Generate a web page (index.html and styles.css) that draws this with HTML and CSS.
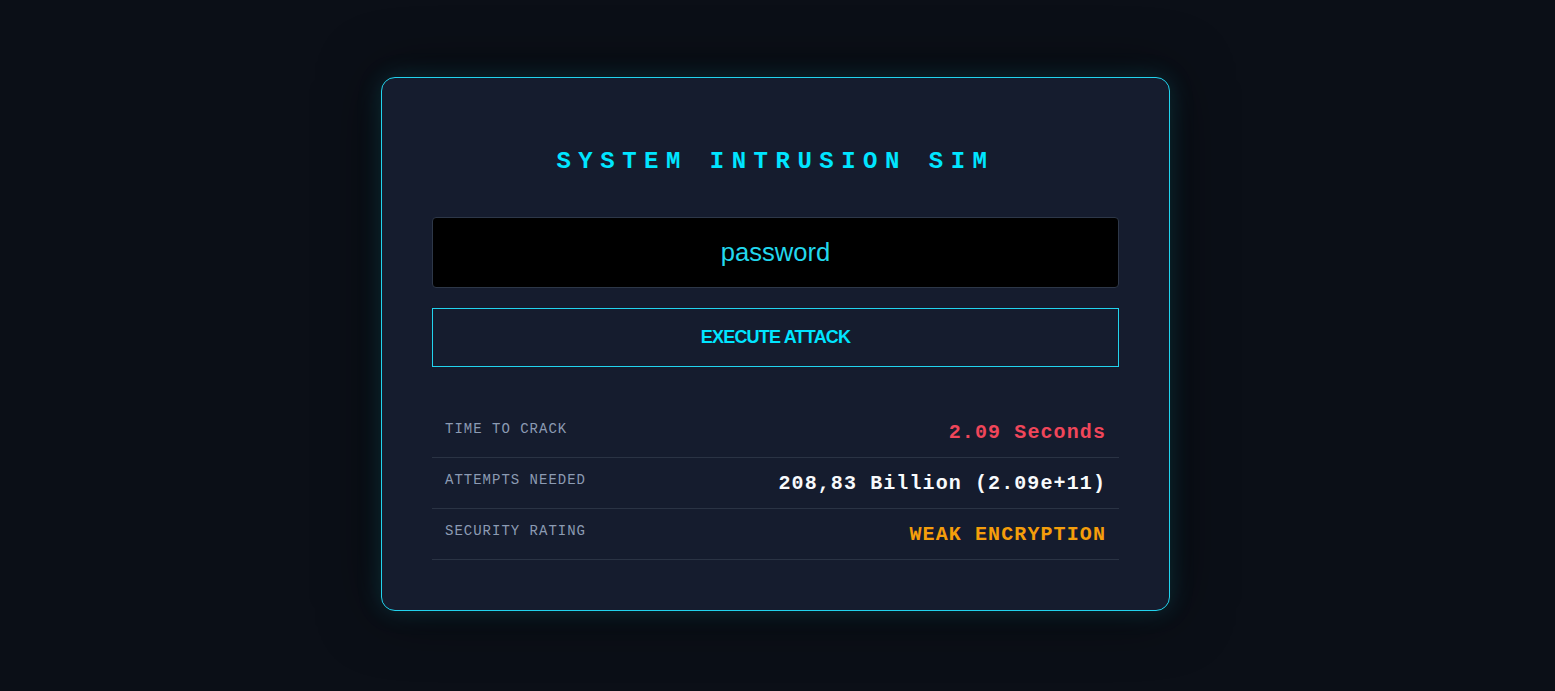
FILE: index.html
```html
<!DOCTYPE html>
<html lang="en">
<head>
  <meta charset="UTF-8">
  <title>System Intrusion Sim</title>
  <link rel="stylesheet" href="styles.css">
</head>
<body>
  <div class="terminal">
    <h1>System Intrusion Sim</h1>
    <input class="target" id="target" type="text" value="password" spellcheck="false">
    <button class="attack" id="attack">Execute Attack</button>

    <div class="stats">
      <div class="stat">
        <span class="label">Time to crack</span>
        <span class="value danger" id="crackTime">2.09 Seconds</span>
      </div>
      <div class="stat">
        <span class="label">Attempts needed</span>
        <span class="value" id="attempts">208,83 Billion (2.09e+11)</span>
      </div>
      <div class="stat">
        <span class="label">Security rating</span>
        <span class="value warn" id="rating">WEAK ENCRYPTION</span>
      </div>
    </div>
  </div>
</body>
</html>
```

FILE: styles.css
```css
body {
  font-family: 'Liberation Mono', 'Courier New', monospace;
  background: #0b0f17;
  color: #e2e8f0;
  display: flex;
  align-items: center;
  justify-content: center;
  box-sizing: border-box;
  min-height: 100vh;
  margin: 0;
  padding: 0 4px 3px 0;
}
.terminal {
  width: 687px;
  padding: 50px;
  background: #151c2e;
  border: 1px solid #22d3ee;
  border-radius: 14px;
  box-shadow: 0 0 24px rgba(34, 211, 238, 0.18), 0 0 60px rgba(0, 0, 0, 0.6);
}
h1 {
  margin: 20px 0 41px;
  font-size: 24px;
  line-height: 28px;
  font-weight: bold;
  letter-spacing: 7.5px;
  text-transform: uppercase;
  text-align: center;
  color: #00e5ff;
}
.target {
  display: block;
  box-sizing: border-box;
  width: 100%;
  height: 71px;
  padding: 0 20px;
  background: #000;
  border: 1px solid #2d3748;
  border-radius: 4px;
  color: #22d8ee;
  font-family: 'Liberation Sans', Arial, sans-serif;
  font-size: 25.6px;
  text-align: center;
  outline: none;
}
.attack {
  display: block;
  box-sizing: border-box;
  width: 100%;
  height: 59px;
  margin-top: 20px;
  background: transparent;
  border: 1px solid #22d3ee;
  color: #00e5ff;
  font-family: 'Liberation Sans', Arial, sans-serif;
  font-size: 18px;
  font-weight: bold;
  letter-spacing: -0.8px;
  text-transform: uppercase;
  cursor: pointer;
}
.stats {
  margin-top: 40px;
}
.stat {
  display: flex;
  justify-content: space-between;
  align-items: flex-start;
  box-sizing: border-box;
  height: 51px;
  padding: 14px 13px 0;
  border-bottom: 1px solid #2a3344;
}
.label {
  font-size: 14px;
  line-height: 16px;
  letter-spacing: 1px;
  text-transform: uppercase;
  color: #8c9bb3;
}
.value {
  font-size: 20px;
  line-height: 24px;
  font-weight: bold;
  letter-spacing: 1.1px;
  color: #f8fafc;
}
.danger {
  color: #f0465a;
}
.warn {
  color: #f59e0b;
}
```
